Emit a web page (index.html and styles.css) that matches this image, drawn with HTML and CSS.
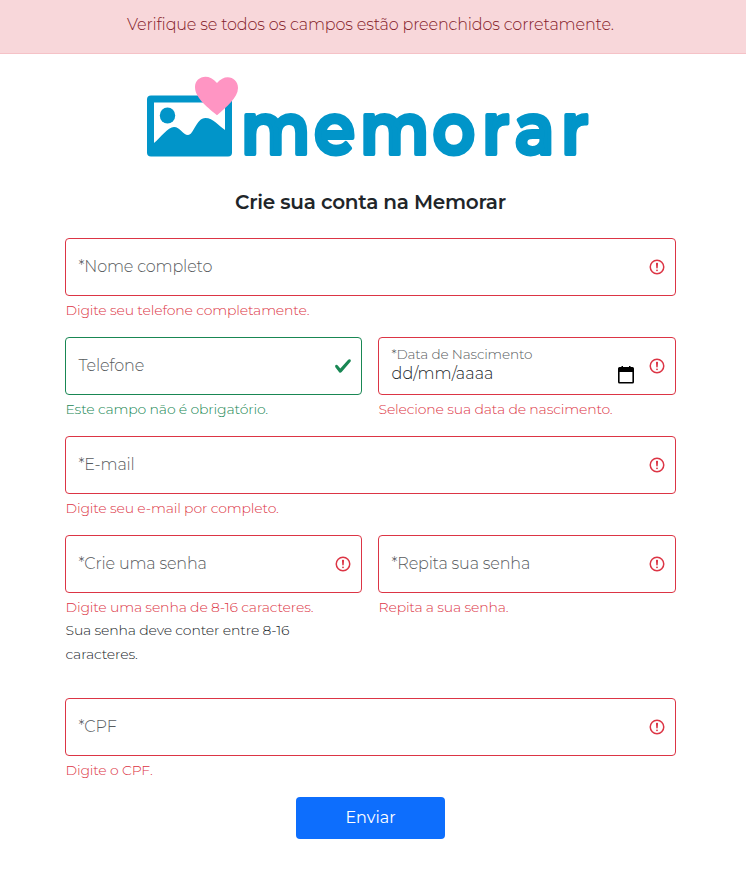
FILE: index.html
```html
<!DOCTYPE html>
<html lang="pt-BR">
<head>
<meta charset="utf-8">
<title>Memorar</title>
<link rel="stylesheet" href="styles.css">
</head>
<body>
<svg class="sprite" aria-hidden="true">
  <symbol id="invalid" viewBox="0 0 12 12"><circle cx="6" cy="6" r="4.5" fill="none" stroke="#dc3545"/><path d="M5.8 3.6h.4L6 6.5z" fill="none" stroke="#dc3545" stroke-linejoin="round"/><circle cx="6" cy="8.2" r=".6" fill="#dc3545"/></symbol>
  <symbol id="valid" viewBox="0 0 8 8"><path fill="#198754" d="M2.3 6.73L.6 4.53c-.4-1.04.46-1.4 1.1-.8l1.1 1.4 3.4-3.8c.6-.63 1.6-.27 1.2.7l-4 4.6c-.43.5-.8.4-1.1.1z"/></symbol>
</svg>
<div class="alert" role="alert">Verifique se todos os campos estão preenchidos corretamente.</div>
<main class="page">
  <svg class="logo" viewBox="0 0 447 84" role="img">
    <rect x="0" y="19.5" width="85" height="61" rx="4" fill="#0195c9"/>
    <path d="M7 26.5H78V54C72 50 66 42 58.5 42C49 42 47 59 41 59C36 59 33 51 27 51C21 51 13 62 7 67Z" fill="#fff"/>
    <ellipse cx="20.5" cy="39.5" rx="7.7" ry="8" fill="#0195c9"/>
    <path d="M70 39.3C63 33 48 23 48 11C48 1 61-4 70 7C78-3 91 1 91 12C91 22 79 31 70 39.3Z" fill="#ff95c3"/>
    <text class="wordmark" transform="scale(.92 1)" x="101.8 181.5 231.2 310.3 363.8 399.5 449.7" y="78.5">memorar</text>
  </svg>
  <h1 class="title">Crie sua conta na Memorar</h1>
  <form class="form">
    <div class="field">
      <div class="control"><span class="label">*Nome completo</span><svg class="state"><use href="#invalid"/></svg></div>
      <div class="feedback">Digite seu telefone completamente.</div>
    </div>
    <div class="row">
      <div class="field">
        <div class="control ok"><span class="label">Telefone</span><svg class="state"><use href="#valid"/></svg></div>
        <div class="feedback ok">Este campo não é obrigatório.</div>
      </div>
      <div class="field">
        <div class="control">
          <div class="date"><span class="label small">*Data de Nascimento</span><span class="value">dd/mm/aaaa</span></div>
          <svg class="calendar" viewBox="0 0 16 18"><path d="M2 1H3.5V0H5V1H11V0H12.5V1H14.5Q16 1 16 2.5V16Q16 17.5 14.5 17.5H1.5Q0 17.5 0 16V2.5Q0 1 1.5 1ZM1.6 6V16H14.4V6Z" fill="#000" fill-rule="evenodd"/></svg>
          <svg class="state"><use href="#invalid"/></svg>
        </div>
        <div class="feedback">Selecione sua data de nascimento.</div>
      </div>
    </div>
    <div class="field">
      <div class="control"><span class="label">*E-mail</span><svg class="state"><use href="#invalid"/></svg></div>
      <div class="feedback">Digite seu e-mail por completo.</div>
    </div>
    <div class="row passwords">
      <div class="field">
        <div class="control"><span class="label">*Crie uma senha</span><svg class="state"><use href="#invalid"/></svg></div>
        <div class="feedback">Digite uma senha de 8-16 caracteres.</div>
        <div class="help">Sua senha deve conter entre 8-16<br>caracteres.</div>
      </div>
      <div class="field">
        <div class="control"><span class="label">*Repita sua senha</span><svg class="state"><use href="#invalid"/></svg></div>
        <div class="feedback">Repita a sua senha.</div>
      </div>
    </div>
    <div class="field">
      <div class="control"><span class="label">*CPF</span><svg class="state"><use href="#invalid"/></svg></div>
      <div class="feedback">Digite o CPF.</div>
    </div>
    <button class="submit" type="button">Enviar</button>
  </form>
</main>
</body>
</html>
```
FILE: styles.css
```css
* { box-sizing: border-box; }
body { margin: 0; background: #fff; color: #212529; font: 300 16px/24px Montserrat, Inter, sans-serif; letter-spacing: -0.14px; }
.sprite { position: absolute; width: 0; height: 0; }
.alert { height: 54px; padding: 13px 5px 0 0; text-align: center; background: #f8d7da; border-bottom: 1px solid #f5c2c7; color: #842029; }
.page { width: 611px; margin-left: 65px; }
.logo { display: block; width: 447px; height: 84px; margin: 22px 0 0 82px; overflow: visible; }
.wordmark { font: 600 72px Montserrat, "Open Sans", sans-serif; letter-spacing: 0; fill: #0195c9; stroke: #0195c9; stroke-width: 4; stroke-linejoin: round; }
.title { margin: 30px 0 24px; font-size: 20px; line-height: 24px; font-weight: 600; letter-spacing: -0.24px; text-align: center; }
.form { display: flex; flex-direction: column; gap: 16px; }
.row { display: grid; grid-template-columns: 297px 298px; gap: 16px; }
.passwords { margin-bottom: 16px; }
.control { display: flex; align-items: center; height: 58px; padding: 0 9px 0 12.5px; border: 1px solid #dc3545; border-radius: 4px; }
.control.ok { border-color: #198754; }
.label { color: #585c60; white-space: nowrap; letter-spacing: -0.15px; }
.state { width: 18px; height: 18px; margin-left: auto; flex: none; }
.date { display: flex; flex-direction: column; }
.label.small { font-size: 13.6px; line-height: 16px; margin-top: -2px; margin-bottom: 1px; letter-spacing: -0.14px; }
.value { line-height: 22px; letter-spacing: 0.1px; }
.calendar { width: 16px; height: 18px; margin: 17px 14px 0 auto; flex: none; }
.calendar + .state { margin-left: 0; }
.feedback { margin-top: 4px; padding-left: 0.5px; font-size: 14px; line-height: 21px; color: #dc3545; white-space: nowrap; letter-spacing: -0.15px; }
.feedback.ok { color: #198754; }
.help { padding-left: 0.5px; font-size: 14px; line-height: 24px; white-space: nowrap; letter-spacing: -0.15px; }
.submit { align-self: center; width: 149px; height: 42px; padding: 0; border: 0; border-radius: 4px; background: #0d6efd; color: #fff; font: 400 16px/24px Montserrat, Inter, sans-serif; }
```
